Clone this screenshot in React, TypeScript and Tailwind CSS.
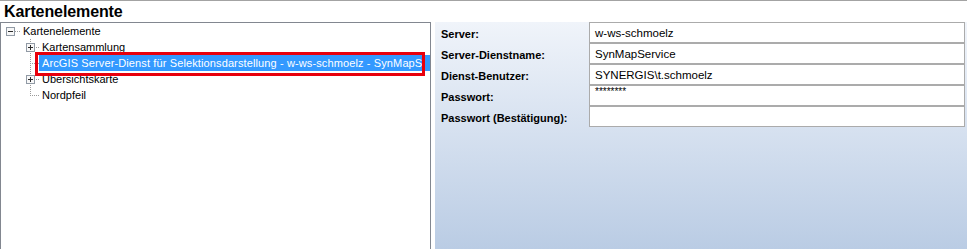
import React from 'react'

type Node = {
  label: string
  toggle?: 'plus' | 'minus'
  selected?: boolean
}

const children: Node[] = [
  { label: 'Kartensammlung', toggle: 'plus' },
  { label: 'ArcGIS Server-Dienst für Selektionsdarstellung - w-ws-schmoelz - SynMapS', selected: true },
  { label: 'Übersichtskarte', toggle: 'plus' },
  { label: 'Nordpfeil' },
]

const fields = [
  { label: 'Server:', value: 'w-ws-schmoelz' },
  { label: 'Server-Dienstname:', value: 'SynMapService' },
  { label: 'Dienst-Benutzer:', value: 'SYNERGIS\\t.schmoelz' },
  { label: 'Passwort:', value: '********', secret: true },
  { label: 'Passwort (Bestätigung):', value: '' },
]

function ToggleBox({ x, kind }: { x: number; kind: 'plus' | 'minus' }) {
  return (
    <g>
      <rect x={x - 4 + 0.5} y={4.5} width={8} height={8} fill="#f7f7f7" stroke="#919aa5" />
      <line x1={x - 2} y1={8.5} x2={x + 3} y2={8.5} stroke="#2a2a2a" />
      {kind === 'plus' && <line x1={x + 0.5} y1={6} x2={x + 0.5} y2={11} stroke="#2a2a2a" />}
    </g>
  )
}

function RootRow() {
  return (
    <div className="flex h-[16px] items-center">
      <svg width={21} height={16} className="shrink-0">
        <line x1={14} y1={8.5} x2={20} y2={8.5} stroke="#9a9a9a" strokeDasharray="1 1" />
        <ToggleBox x={9} kind="minus" />
      </svg>
      <span className="pl-[1px] text-[11px] leading-[16px] text-black whitespace-nowrap">Kartenelemente</span>
    </div>
  )
}

function ChildRow({ node, last }: { node: Node; last: boolean }) {
  return (
    <div className="flex h-[16px] items-stretch">
      <svg width={38} height={16} className="shrink-0">
        <line x1={29.5} y1={0} x2={29.5} y2={last ? 9 : 16} stroke="#9a9a9a" strokeDasharray="1 1" />
        <line x1={31} y1={8.5} x2={38} y2={8.5} stroke="#9a9a9a" strokeDasharray="1 1" />
        {node.toggle && <ToggleBox x={29} kind={node.toggle} />}
      </svg>
      <span
        className={
          node.selected
            ? 'flex-1 pl-[3px] bg-[#3399ff] text-white text-[11px] tracking-[0.12px] leading-[16px] whitespace-nowrap overflow-hidden'
            : 'pl-[3px] text-black text-[11px] leading-[16px] whitespace-nowrap'
        }
      >
        {node.label}
      </span>
    </div>
  )
}

export default function App() {
  return (
    <div className="relative w-[967px] h-[249px] overflow-hidden bg-white border-t border-[#a3a3a3] font-['Liberation_Sans',Arial,sans-serif]">
      <h1 className="h-[21px] pl-[4px] text-[16px] font-bold leading-[21px] tracking-[-0.1px] text-black">
        Kartenelemente
      </h1>

      <div className="flex h-[227px]">
        {/* Tree */}
        <div className="w-[431px] shrink-0 border-l border-t border-r border-[#828790] overflow-hidden">
          <RootRow />
          {children.map((c, i) => (
            <ChildRow key={c.label} node={c} last={i === children.length - 1} />
          ))}
        </div>

        <div className="w-[4px] shrink-0" />

        {/* Properties */}
        <div className="flex-1 bg-gradient-to-b from-[#f0f4fa] to-[#bacce4] pl-[6px] pr-[2px]">
          {fields.map(f => (
            <div key={f.label} className="flex h-[21px]">
              <div className="w-[148px] shrink-0 pt-[3px] flex items-center text-[11px] font-bold text-black whitespace-nowrap">
                {f.label}
              </div>
              <div
                className={
                  f.secret
                    ? 'flex-1 h-[21px] border border-[#ababab] bg-white pl-[5px] text-[10px] leading-[12px] text-black'
                    : 'flex-1 h-[21px] border border-[#ababab] bg-white pl-[5px] pt-[1px] text-[11.5px] leading-[18px] text-black whitespace-nowrap'
                }
              >
                {f.value}
              </div>
            </div>
          ))}
        </div>
      </div>

      {/* red highlight frame */}
      <div className="absolute left-[35px] top-[51px] w-[390px] h-[24px] border-[3px] border-[#e8000c] pointer-events-none" />
    </div>
  )
}
